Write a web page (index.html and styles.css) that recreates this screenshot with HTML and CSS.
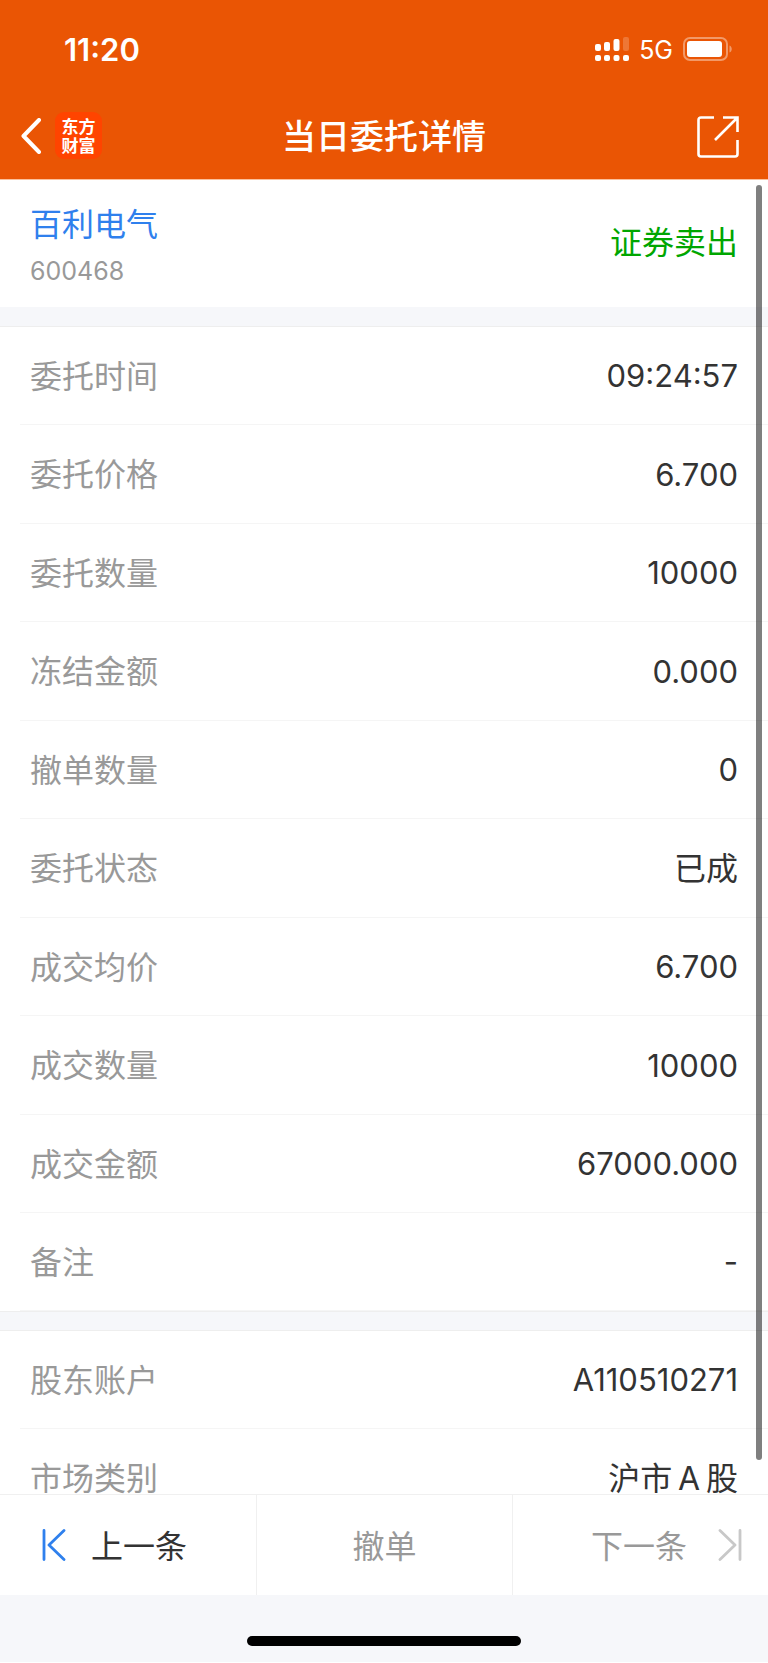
FILE: index.html
```html
<!DOCTYPE html>
<html lang="zh-CN">
<head>
    <meta charset="UTF-8">
    <meta name="viewport" content="width=device-width, initial-scale=1.0">
    <title>当日委托详情</title>
    <link rel="stylesheet" href="styles.css">
</head>
<body>
    <header class="header">
        <!-- 状态栏 -->
        <div class="status-bar">
            <span class="time">11:20</span>
            <div class="status-icons">
                <svg width="34" height="26" viewBox="0 0 34 26" fill="#fff">
                    <rect x="0" y="8" width="6" height="7" rx="2"/>
                    <rect x="9" y="6" width="6" height="9" rx="2"/>
                    <rect x="18.500" y="3" width="6" height="12" rx="2"/>
                    <rect x="28" y="1" width="6" height="14" rx="2" opacity="0.2"/>
                    <rect x="0" y="19" width="6" height="6" rx="2"/>
                    <rect x="9" y="19" width="6" height="6" rx="2"/>
                    <rect x="18.500" y="19" width="6" height="6" rx="2"/>
                    <rect x="28" y="19" width="6" height="6" rx="2"/>
                </svg>
                <span class="network">5G</span>
                <svg width="50" height="24" viewBox="0 0 50 24" fill="none">
                    <rect x="1" y="1" width="43" height="22" rx="6" stroke="#fff" stroke-opacity="0.4" stroke-width="2"/>
                    <rect x="4" y="4" width="35" height="16" rx="3" fill="#fff"/>
                    <path d="M46.500 8.500C49.500 9.500 49.500 14.500 46.500 15.500Z" fill="#fff" fill-opacity="0.4"/>
                </svg>
            </div>
        </div>

        <!-- 导航栏 -->
        <nav class="nav-bar">
            <div class="nav-left">
                <button type="button" class="icon-button" aria-label="返回">
                    <svg width="20" height="36" viewBox="0 0 20 36" fill="none" stroke="#fff" stroke-width="4" stroke-linecap="round" stroke-linejoin="round">
                        <path d="M18 2L2.500 18L18 34"/>
                    </svg>
                </button>
                <a href="#" class="logo">东方<br>财富</a>
            </div>
            <h1>当日委托详情</h1>
            <button type="button" class="icon-button share" aria-label="分享">
                <svg width="42" height="42" viewBox="0 0 42 42" fill="none" stroke="#fff" stroke-width="2.600">
                    <path d="M17 1.500H4Q1.500 1.500 1.500 4V38Q1.500 40.500 4 40.500H38Q40.500 40.500 40.500 38V24"/>
                    <path d="M26 1.500H40.500V16M40 2L18 24"/>
                </svg>
            </button>
        </nav>
    </header>

    <main class="content">
        <section class="summary">
            <div>
                <a href="#" class="stock-name">百利电气</a>
                <p class="stock-code">600468</p>
            </div>
            <span class="side">证券卖出</span>
        </section>

        <!-- 委托信息 -->
        <dl class="list">
            <div class="row"><dt>委托时间</dt><dd>09:24:57</dd></div>
            <div class="row"><dt>委托价格</dt><dd>6.700</dd></div>
            <div class="row"><dt>委托数量</dt><dd>10000</dd></div>
            <div class="row"><dt>冻结金额</dt><dd>0.000</dd></div>
            <div class="row"><dt>撤单数量</dt><dd>0</dd></div>
            <div class="row"><dt>委托状态</dt><dd class="text">已成</dd></div>
            <div class="row"><dt>成交均价</dt><dd>6.700</dd></div>
            <div class="row"><dt>成交数量</dt><dd>10000</dd></div>
            <div class="row"><dt>成交金额</dt><dd>67000.000</dd></div>
            <div class="row"><dt>备注</dt><dd>-</dd></div>
        </dl>

        <!-- 账户信息 -->
        <dl class="list">
            <div class="row"><dt>股东账户</dt><dd>A110510271</dd></div>
            <div class="row"><dt>市场类别</dt><dd class="text">沪市&thinsp;A&thinsp;股</dd></div>
        </dl>
        <div class="scrollbar"></div>
    </main>

    <footer class="toolbar">
        <button type="button" class="prev">
            <svg width="24" height="32" viewBox="0 0 24 32" fill="none" stroke="#2f80ed" stroke-width="2.800" stroke-linecap="round" stroke-linejoin="round">
                <path d="M2 1.500V30.500M22 1.500L7 16L22 30.500"/>
            </svg>
            <span>上一条</span>
        </button>
        <button type="button" disabled><span>撤单</span></button>
        <button type="button" class="next" disabled>
            <span>下一条</span>
            <svg width="24" height="32" viewBox="0 0 24 32" fill="none" stroke="#c8c8c8" stroke-width="2.800" stroke-linecap="round" stroke-linejoin="round">
                <path d="M22 1.500V30.500M2 1.500L17 16L2 30.500"/>
            </svg>
        </button>
    </footer>
    <div class="home-area">
        <div class="home-indicator"></div>
    </div>
</body>
</html>
```
FILE: styles.css
```css
* {
    box-sizing: border-box;
}

body {
    margin: 0;
    height: 100vh;
    display: flex;
    flex-direction: column;
    overflow: hidden;
    font-family: Inter, "Noto Sans CJK SC", sans-serif;
    font-size: 32px;
    color: #333;
    background-color: #fff;
}

a {
    text-decoration: none;
}

svg {
    display: block;
    flex-shrink: 0;
}

button {
    margin: 0;
    padding: 0;
    border: none;
    background: none;
    font-family: inherit;
    font-size: 32px;
    color: #333;
    cursor: pointer;
}

button:disabled {
    color: #999;
    cursor: default;
}

/* 顶部 */
.header {
    flex-shrink: 0;
    color: #fff;
    background-color: #ea5504;
    border-bottom: 1px solid #fbc09c;
}

.status-bar {
    display: flex;
    justify-content: space-between;
    align-items: center;
    height: 98px;
    padding: 0 35px 0 64px;
}

.time {
    font-size: 31px;
    font-weight: 600;
}

.status-icons {
    display: flex;
    align-items: center;
    gap: 10px;
}

.network {
    padding-top: 2px;
    font-size: 25px;
}

.nav-bar {
    display: grid;
    grid-template-columns: 1fr auto 1fr;
    align-items: center;
    height: 81px;
    padding: 0 29px 6px;
}

.nav-left {
    display: flex;
    align-items: center;
    gap: 14px;
    margin-left: -8px;
}

.icon-button {
    display: block;
}

.share {
    justify-self: end;
    padding-top: 2px;
}

.logo {
    width: 47px;
    height: 47px;
    padding-top: 4px;
    border-radius: 9px;
    background-color: #ff4400;
    color: #fff;
    font-family: "Noto Sans CJK SC", sans-serif;
    font-size: 17px;
    font-weight: 700;
    line-height: 19px;
    text-align: center;
}

h1 {
    margin: 0;
    padding-bottom: 2px;
    font-size: 34px;
    font-weight: 500;
}

/* 内容 */
.content {
    position: relative;
    flex: 1;
    min-height: 0;
    overflow: hidden;
    background-color: #f6f7fa;
}

.summary {
    display: flex;
    justify-content: space-between;
    align-items: center;
    height: 127px;
    padding: 0 30px;
    background-color: #fff;
}

.stock-name {
    display: block;
    padding-top: 4px;
    line-height: 48px;
    color: #2f80ed;
}

.stock-code {
    margin: 2px 0 0;
    font-size: 25px;
    line-height: 40px;
    color: #999;
}

.side {
    padding-bottom: 8px;
    color: #00a600;
}

.list {
    margin: 20px 0 0;
    background-color: #fff;
    box-shadow: 0 0 0 1px #eee;
}

.row {
    display: flex;
    justify-content: space-between;
    align-items: center;
    height: 98px;
    margin-left: 20px;
    padding: 0 30px 0 10px;
    border-bottom: 1px solid #f5f5f5;
}

.row:nth-child(even):not(:last-child) {
    height: 99px;
}

dt {
    padding-bottom: 4px;
    color: #999;
}

dd {
    margin: 0;
    font-size: 31px;
}

dd.text {
    padding-bottom: 4px;
    font-size: 32px;
}

.scrollbar {
    position: absolute;
    top: 5px;
    right: 6px;
    bottom: 34px;
    width: 6px;
    border-radius: 3px;
    background-color: rgba(0, 0, 0, 0.5);
}

/* 底部操作栏 */
.toolbar {
    display: grid;
    grid-template-columns: repeat(3, 1fr);
    flex-shrink: 0;
    height: 101px;
    border-top: 1px solid #f0f0f0;
    background-color: #fff;
}

.toolbar button {
    display: flex;
    justify-content: center;
    align-items: center;
    gap: 25px;
}

.toolbar button + button {
    border-left: 1px solid #f0f0f0;
}

.toolbar span {
    padding-bottom: 3px;
}

.toolbar .prev {
    justify-content: flex-start;
    padding-left: 42px;
}

.toolbar .next {
    justify-content: flex-end;
    gap: 31px;
    padding-right: 26px;
}

.home-area {
    flex-shrink: 0;
    height: 68px;
    padding-top: 41px;
    border-bottom: 1px solid #fff;
    background-color: #f6f7fa;
}

.home-indicator {
    width: 274px;
    height: 10px;
    margin: 0 auto;
    border-radius: 5px;
    background-color: #000;
}
```
